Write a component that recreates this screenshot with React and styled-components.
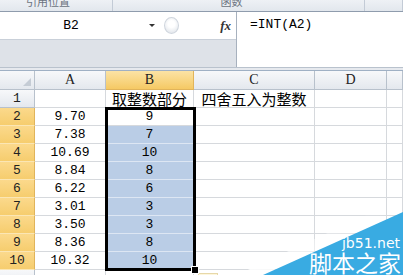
import React from 'react';
import styled, { createGlobalStyle, css } from 'styled-components';

const GlobalStyle = createGlobalStyle`
    html, body {
        margin: 0;
        padding: 0;
        background: #fff;
    }
`;

const Page = styled.div`
    position: relative;
    width: 403px;
    height: 275px;
    overflow: hidden;
    display: flex;
    flex-direction: column;
    font-family: "Liberation Mono", monospace;
    color: #000;
`;

const Ribbon = styled.div`
    flex: none;
    height: 11px;
    display: grid;
    grid-template-columns: 113px 252px 1fr;
    background: linear-gradient(#eef1f5, #e2e7ed);
    border-bottom: 1px solid #8f9cad;
    overflow: hidden;
`;

const RibbonGroup = styled.div`
    display: flex;
    justify-content: center;
    border-right: 1px solid #c3cbd6;
    overflow: hidden;
    span {
        margin-top: -6px;
        margin-left: ${p => p.shift || 0}px;
        font-family: "Noto Sans CJK SC", sans-serif;
        font-size: 11px;
        line-height: 14px;
        color: #6b7380;
    }
`;

const FormulaBar = styled.div`
    flex: none;
    height: 56px;
    display: flex;
    border-bottom: 1px solid #b9c2cd;
    box-sizing: border-box;
`;

const NameArea = styled.div`
    width: 237px;
    display: flex;
    flex-direction: column;
    background: #dee2e8;
    border-right: 1px solid #a7b1be;
    box-sizing: border-box;
`;

const NameRow = styled.div`
    height: 27px;
    display: flex;
    align-items: center;
    background: #fff;
    border-bottom: 1px solid #c9d0d9;
`;

const NameBox = styled.div`
    width: 142px;
    text-align: center;
    font-size: 13px;
`;

const Arrow = styled.div`
    width: 0;
    height: 0;
    margin-left: 7px;
    border-left: 3px solid transparent;
    border-right: 3px solid transparent;
    border-top: 3px solid #333;
`;

const RoundButton = styled.div`
    width: 15px;
    height: 17px;
    margin-left: 9px;
    border-radius: 50%;
    border: 1px solid #cfd5dd;
    background: radial-gradient(circle at 50% 40%, #fff 30%, #e3e7ec 80%);
    box-sizing: border-box;
`;

const FxLabel = styled.div`
    margin-left: auto;
    margin-right: 5px;
    font-family: "Liberation Serif", serif;
    font-style: italic;
    font-weight: bold;
    font-size: 13px;
    color: #333;
`;

const FormulaInput = styled.div`
    flex: 1;
    padding: 5px 0 0 13px;
    font-size: 13px;
    background: #fff;
`;

const Gap = styled.div`
    flex: none;
    height: 2px;
    background: #e6e9ee;
`;

const Sheet = styled.div`
    position: relative;
    flex: none;
    display: grid;
    grid-template-columns: 35px 71px 88px 121px 72px 16px;
    grid-template-rows: 19px repeat(11, 18px);
    border-top: 1px solid #9fb0c4;
`;

const headerBase = css`
    background: linear-gradient(#f7f8fa, #e4e8ee);
    border-right: 1px solid #b8c1cc;
    border-bottom: 1px solid #b8c1cc;
    color: #222;
`;

const Cell = styled.div`
    box-sizing: border-box;
    display: flex;
    align-items: center;
    justify-content: center;
    font-size: 13px;
    white-space: nowrap;
    overflow: hidden;
    border-right: 1px solid #d6d9dd;
    border-bottom: 1px solid #d6d9dd;
    background: #fff;
    ${p => p.cjk && css`
        font-family: "Noto Sans CJK SC", sans-serif;
        font-size: 15px;
        overflow: visible;
    `}
    ${p => p.kind === 'col' && css`
        ${headerBase};
        font-family: "Liberation Serif", serif;
        font-size: 14px;
    `}
    ${p => p.kind === 'row' && headerBase}
    ${p => p.kind === 'corner' && css`
        ${headerBase};
        position: relative;
        &::after {
            content: '';
            position: absolute;
            right: 3px;
            bottom: 3px;
            border-left: 8px solid transparent;
            border-bottom: 8px solid #c5ccd5;
        }
    `}
    ${p => p.kind === 'col' && p.hot && css`
        background: linear-gradient(#fbe3a5, #f5c964);
        border-right-color: #e1b45a;
        border-bottom-color: #e1b45a;
    `}
    ${p => p.kind === 'row' && p.hot && css`
        background: linear-gradient(#fbd98c, #f6cd6e);
        border-bottom-color: #fbe6b4;
        border-right-color: #e0b45b;
    `}
    ${p => p.selected && css`
        background: #bacde6;
        border-bottom-color: #dde6f3;
    `}
`;

const SelectionFrame = styled.div`
    position: absolute;
    left: 105px;
    top: 36px;
    width: 91px;
    height: 164px;
    border: 3px solid #000;
    box-sizing: border-box;
    pointer-events: none;
    &::after {
        content: '';
        position: absolute;
        right: -6px;
        bottom: -6px;
        width: 6px;
        height: 6px;
        background: #000;
        border: 1px solid #fff;
    }
`;

const FillTag = styled.div`
    position: absolute;
    left: 198px;
    top: 202px;
    width: 18px;
    height: 12px;
    border: 1px solid #e7d8a8;
    background: #fdf6de;
`;

const Watermark = styled.div`
    position: absolute;
    right: 0;
    bottom: 0;
    width: 180px;
    height: 90px;
    pointer-events: none;
    svg {
        display: block;
    }
`;

const MarkSite = styled.div`
    position: absolute;
    right: 3px;
    top: 51px;
    color: #fff;
    font-family: "DejaVu Sans", sans-serif;
    font-size: 14px;
    line-height: 14px;
    white-space: nowrap;
`;

const MarkName = styled.div`
    position: absolute;
    right: 2px;
    top: 66px;
    color: #fff;
    font-family: "Noto Sans CJK SC", sans-serif;
    font-size: 23px;
    line-height: 23px;
    white-space: nowrap;
`;

const values = [
    ['9.70', '9'],
    ['7.38', '7'],
    ['10.69', '10'],
    ['8.84', '8'],
    ['6.22', '6'],
    ['3.01', '3'],
    ['3.50', '3'],
    ['8.36', '8'],
    ['10.32', '10']
];

const App = () => {
    return (
        <Page>
            <GlobalStyle />
            <Ribbon>
                <RibbonGroup shift={-16}><span>引用位置</span></RibbonGroup>
                <RibbonGroup shift={-14}><span>函数</span></RibbonGroup>
                <RibbonGroup />
            </Ribbon>
            <FormulaBar>
                <NameArea>
                    <NameRow>
                        <NameBox>B2</NameBox>
                        <Arrow />
                        <RoundButton />
                        <FxLabel>fx</FxLabel>
                    </NameRow>
                </NameArea>
                <FormulaInput>=INT(A2)</FormulaInput>
            </FormulaBar>
            <Gap />
            <Sheet>
                <Cell kind="corner" />
                <Cell kind="col">A</Cell>
                <Cell kind="col" hot>B</Cell>
                <Cell kind="col">C</Cell>
                <Cell kind="col">D</Cell>
                <Cell kind="col" />

                <Cell kind="row">1</Cell>
                <Cell />
                <Cell cjk>取整数部分</Cell>
                <Cell cjk>四舍五入为整数</Cell>
                <Cell />
                <Cell />

                {values.map(([a, b], i) => (
                    <React.Fragment key={i}>
                        <Cell kind="row" hot>{i + 2}</Cell>
                        <Cell>{a}</Cell>
                        <Cell selected={i > 0}>{b}</Cell>
                        <Cell />
                        <Cell />
                        <Cell />
                    </React.Fragment>
                ))}

                <Cell kind="row" />
                <Cell />
                <Cell />
                <Cell />
                <Cell />
                <Cell />

                <FillTag />
                <SelectionFrame />
            </Sheet>
            <Watermark>
                <svg width="180" height="90" viewBox="0 0 180 90">
                    <defs>
                        <linearGradient id="glow" x1="0" y1="1" x2="0.35" y2="0">
                            <stop offset="0" stopColor="#fff" stopOpacity="0.95" />
                            <stop offset="1" stopColor="#fff" stopOpacity="0" />
                        </linearGradient>
                    </defs>
                    <polygon points="14,90 180,13 180,27 40,90" fill="url(#glow)" />
                    <polygon points="40,90 180,27 180,90" fill="#39abe2" />
                </svg>
                <MarkSite>jb51.net</MarkSite>
                <MarkName>脚本之家</MarkName>
            </Watermark>
        </Page>
    );
};

export default App;
